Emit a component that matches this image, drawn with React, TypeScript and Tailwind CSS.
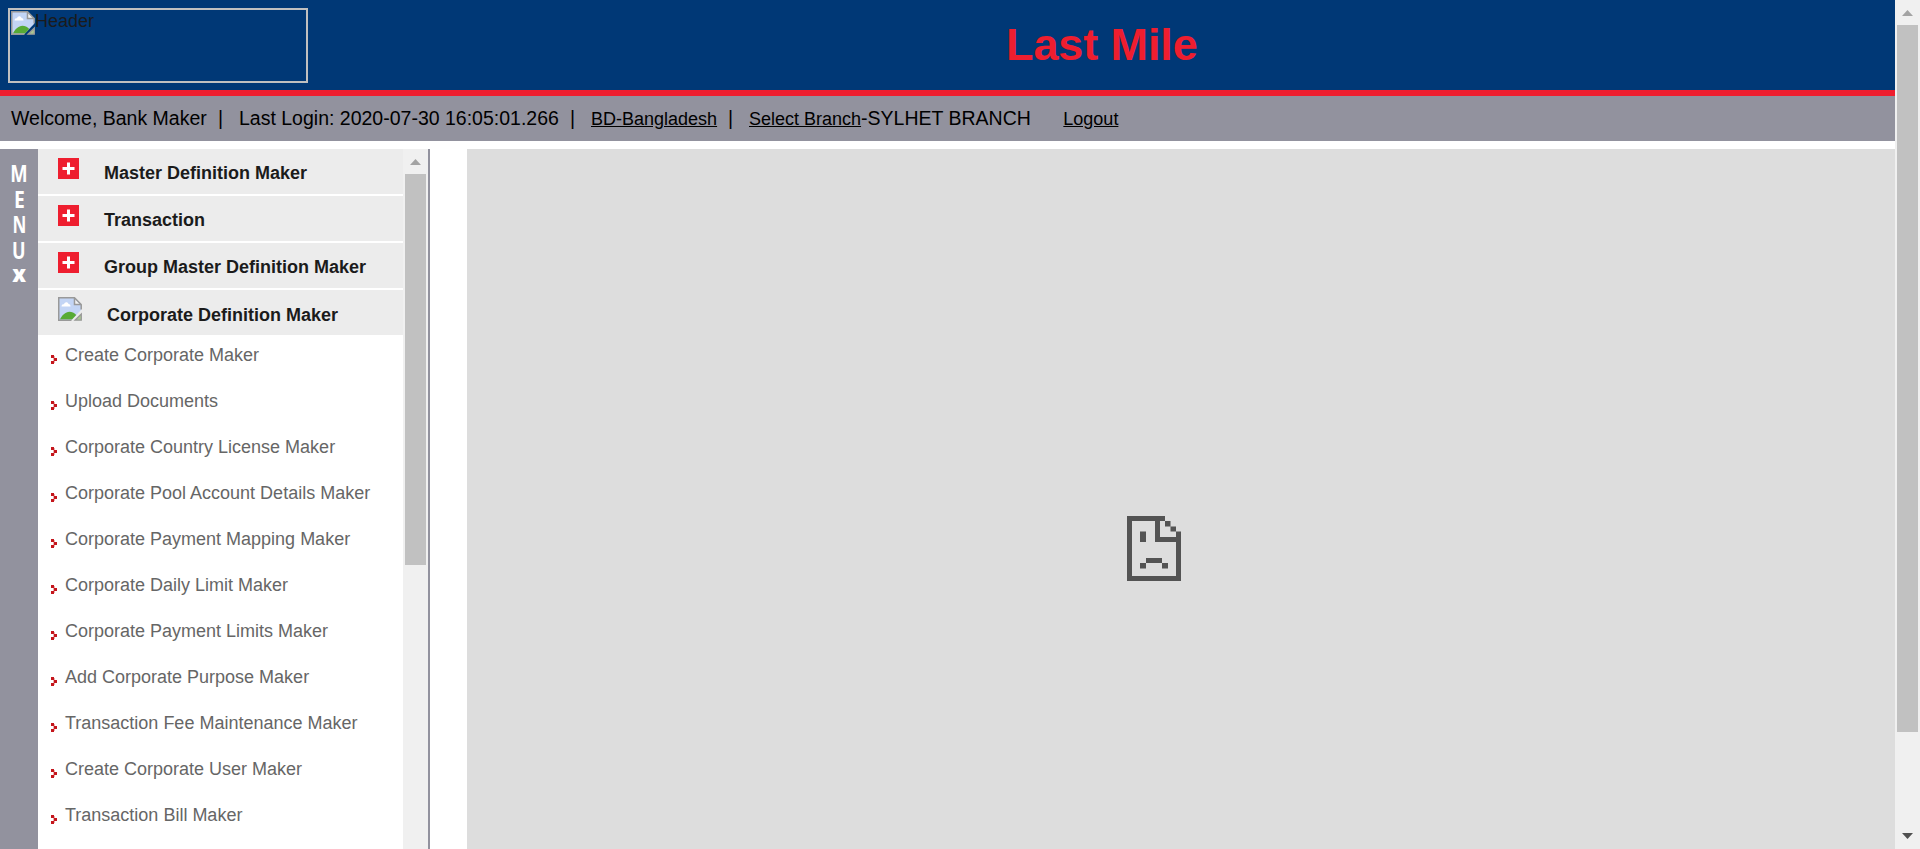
import React from "react";

const groups = ["Master Definition Maker", "Transaction", "Group Master Definition Maker"];

const links = [
  "Create Corporate Maker",
  "Upload Documents",
  "Corporate Country License Maker",
  "Corporate Pool Account Details Maker",
  "Corporate Payment Mapping Maker",
  "Corporate Daily Limit Maker",
  "Corporate Payment Limits Maker",
  "Add Corporate Purpose Maker",
  "Transaction Fee Maintenance Maker",
  "Create Corporate User Maker",
  "Transaction Bill Maker",
];

function BrokenImage() {
  return (
    <svg width="24" height="24" viewBox="0 0 24 24" className="block shrink-0">
      <path d="M1 1H17L23 7V13L13.500 23H1Z" fill="#c3d5f5" />
      <path d="M3.500 9.500C3.500 7.500 5 7 6 7.200C6.500 4.500 10 4.500 10.500 7C12 7 12.500 8 12.500 9.500Z" fill="#fff" />
      <path d="M2 22.500C3.500 18.500 7.500 14.700 11.500 14.700C14 14.700 16 15.700 18.300 18L14 22.500Z" fill="#57ab35" />
      <path d="M16 1.500L22.500 8H16Z" fill="#f4f4f4" />
      <path d="M13.500 23.200H0.750V0.750H16.500L23.200 7.500V12.500" fill="none" stroke="#999" strokeWidth="1.500" />
      <path d="M16.500 1V7.500H23" fill="none" stroke="#999" strokeWidth="1.500" />
      <path d="M23.300 17V23.200H17Z" fill="#a9c98e" stroke="#999" strokeWidth="1.300" />
    </svg>
  );
}

function Plus() {
  return (
    <svg width="21" height="21" viewBox="0 0 21 21" className="block shrink-0">
      <rect width="21" height="21" fill="#ee1e2f" />
      <path d="M10.500 4.500V16.500M4.500 10.500H16.500" stroke="#fff" strokeWidth="3" />
    </svg>
  );
}

function Bullet() {
  return (
    <svg width="6" height="9" viewBox="0 0 6 9" shapeRendering="crispEdges" className="block shrink-0">
      <path d="M0 0H3V3H0ZM3 3H6V6H3ZM0 6H3V9H0Z" fill="#c4161c" />
      <path d="M3 1H4V3H3ZM3 6H4V8H3ZM2 3H3V6H2Z" fill="#eeb0b0" />
    </svg>
  );
}

function Arrow({ down = false }: { down?: boolean }) {
  return (
    <svg width="11" height="6" viewBox="0 0 11 6" className="block">
      {down ? <path d="M0 0H11L5.500 6Z" fill="#505050" /> : <path d="M0 6H11L5.500 0Z" fill="#a3a3a3" />}
    </svg>
  );
}

function SadPage() {
  return (
    <svg width="54" height="65" viewBox="0 0 54 65" className="block">
      <path
        fillRule="evenodd"
        fill="#535353"
        d="M0 0H38V5H33V21H49V15.500H54V65H0ZM5 5V60H49V26H28V5Z"
      />
      <path
        fill="#535353"
        d="M38 5H43.500V10.500H38ZM43.500 10.500H49V15.500H43.500ZM13 15.500H19V26H13ZM19 42H35V47H19ZM13 47H19V52.500H13ZM35 47H41V52.500H35Z"
      />
    </svg>
  );
}

export default function App() {
  return (
    <div className="flex h-[849px] w-[1920px] overflow-hidden bg-white font-['Liberation_Sans',Arial,sans-serif]">
      <div className="flex w-[1895px] flex-col">
        <header className="flex h-[96px] shrink-0 border-b-[6px] border-[#ee1e2f] bg-[#003876] pt-2 pl-2">
          <div className="flex h-[75px] w-[300px] border-2 border-[#c0c0c0] p-px">
            <BrokenImage />
            <span className="text-[18px] leading-[20px] text-[#1b1b1b]">Header</span>
          </div>
          <h1 className="ml-[698px] text-[45px] leading-[74px] font-bold tracking-[-0.1px] whitespace-nowrap text-[#ee1e2f]">
            Last Mile
          </h1>
        </header>

        <nav className="flex h-[45px] shrink-0 items-baseline bg-[#92929e] pl-[11px] text-[19.5px] leading-[44px] whitespace-pre text-black">
          <span className="w-[207px]">Welcome, Bank Maker</span>
          <span className="w-[21px]">|</span>
          <span className="w-[331px]">Last Login: 2020-07-30 16:05:01.266</span>
          <span className="w-[21px]">|</span>
          <a className="w-[137px] text-[18px] underline">BD-Bangladesh</a>
          <span className="w-[21px]">|</span>
          <a className="text-[18px] underline">Select Branch</a>
          <span>-SYLHET BRANCH</span>
          <a className="ml-[32.5px] text-[18px] underline">Logout</a>
        </nav>

        <div className="mt-2 flex min-h-0 grow">
          <aside className="flex w-[38px] shrink-0 flex-col items-center bg-[#92929e] pt-[12px] font-['Open_Sans',sans-serif] text-[23px] leading-[25.500px] font-bold text-white">
            <span className="scale-x-[0.8]">M</span>
            <span className="scale-x-[0.84]">E</span>
            <span className="scale-x-[0.74]">N</span>
            <span className="scale-x-[0.78]">U</span>
            <span className="-mt-[2px] scale-x-[0.95] font-extrabold">x</span>
          </aside>
          <div className="flex w-[365px] shrink-0 flex-col overflow-hidden">
            {groups.map((label) => (
              <div key={label} className="mb-[2px] flex h-[45px] shrink-0 bg-[#ececec] pt-[9px] pl-[20px]">
                <Plus />
                <span className="ml-[25px] pt-[5px] text-[18px] leading-[20px] font-bold text-[#1b1b1b]">{label}</span>
              </div>
            ))}
            <div className="flex h-[45px] shrink-0 bg-[#ececec] pt-[7px] pl-[20px]">
              <BrokenImage />
              <span className="ml-[25px] pt-[8px] text-[18px] leading-[20px] font-bold text-[#1b1b1b]">
                Corporate Definition Maker
              </span>
            </div>
            {links.map((label) => (
              <div key={label} className="flex h-[46px] shrink-0 pl-[13px] text-[18px] leading-[20px] text-[#666]">
                <div className="pt-[20px]">
                  <Bullet />
                </div>
                <span className="ml-[8px] pt-[10px]">{label}</span>
              </div>
            ))}
          </div>
          <div className="flex w-[27px] shrink-0 flex-col items-center border-r-2 border-[#92929e] bg-[#f0f0f0] pt-[10px]">
            <Arrow />
            <div className="mt-[9px] h-[391px] w-[21px] bg-[#c1c1c1]" />
          </div>
          <main className="ml-[37px] flex grow justify-center bg-[#ddd] pt-[367px]">
            <div className="mr-[54px]">
              <SadPage />
            </div>
          </main>
        </div>
      </div>
      <div className="flex w-[25px] flex-col items-center bg-[#f0f0f0] pt-[10px] pb-[10px]">
        <Arrow />
        <div className="mt-[9px] mb-auto h-[707px] w-[21px] bg-[#c1c1c1]" />
        <Arrow down />
      </div>
    </div>
  );
}
